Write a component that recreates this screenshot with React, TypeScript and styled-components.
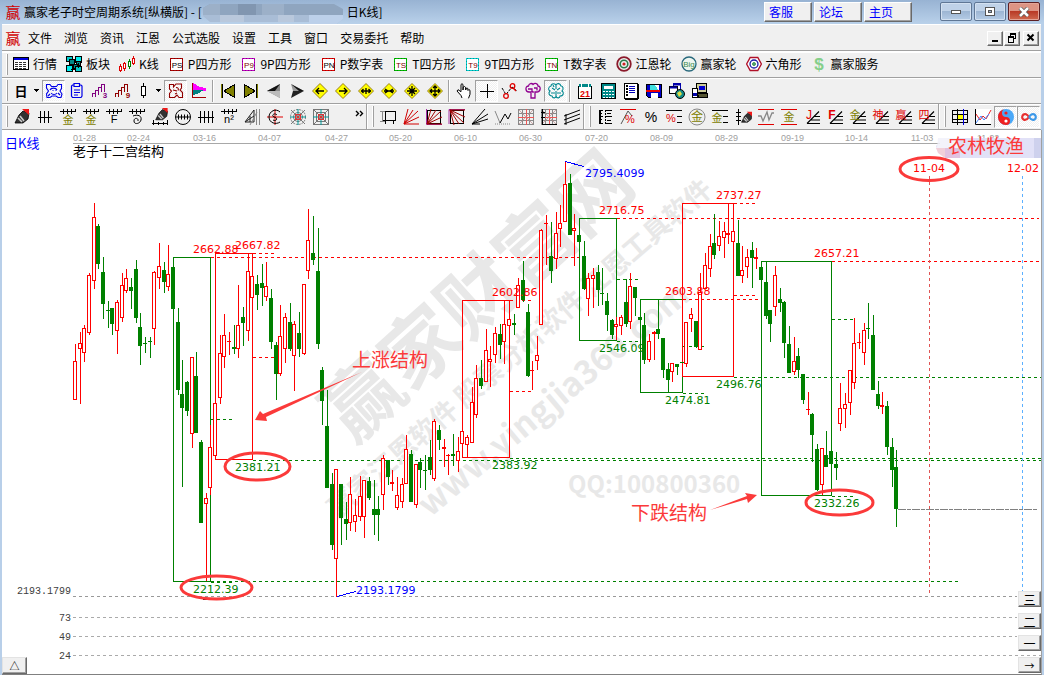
import React from 'react';
import styled, { createGlobalStyle, css } from 'styled-components';

const UI = `"Liberation Sans", "Noto Sans CJK SC", sans-serif`;
const CJK = `"Noto Sans CJK SC", sans-serif`;

const GlobalStyle = createGlobalStyle`
  * { box-sizing: border-box; }
  body { margin: 0; background: #fff; font-family: ${CJK}; font-size: 12px; color: #000; }
  button { font: inherit; color: inherit; margin: 0; padding: 0; border: 0; background: none; }
`;

/* ---------- window frame ---------- */

const Window = styled.div`
  display: flex;
  flex-direction: column;
  min-height: 100vh;
  background: #b8cfe9;
`;

const TitleBar = styled.header`
  display: flex;
  align-items: center;
  height: 24px;
  padding: 0 4px 0 5px;
  background: linear-gradient(#98b3d3, #b9d1ea);
`;

const TitleText = styled.h1`
  margin: 0 0 0 3px;
  font-size: 12px;
  font-weight: 400;
  line-height: 24px;
  white-space: pre;
`;

const Grow = styled.div`
  flex: 1;
`;

const LinkRow = styled.nav`
  display: flex;
  gap: 2px;
  margin-right: 28px;
`;

const TitleLink = styled.a`
  width: 48px;
  height: 20px;
  padding-left: 4px;
  line-height: 17px;
  color: #00f;
  text-decoration: none;
  background: #f0f0f0;
  border: 1px solid;
  border-color: #fff #696969 #696969 #fff;
  box-shadow: inset -1px -1px #a0a0a0;
`;

const CaptionRow = styled.div`
  display: flex;
  gap: 2px;
  height: 20px;
`;

const CaptionButton = styled.button<{ $close?: boolean }>`
  display: flex;
  align-items: center;
  justify-content: center;
  width: 32px;
  height: 19px;
  border: 1px solid ${p => (p.$close ? '#5c1f23' : '#5f7795')};
  border-radius: 2px;
  box-shadow: inset 0 0 0 1px ${p => (p.$close ? '#e3a598' : '#d3e1f1')};
  background: ${p => (p.$close
    ? 'linear-gradient(#dd9484 45%, #b93a26 50%, #cf6a50)'
    : 'linear-gradient(#bfd2e8 45%, #9db6d3 50%, #b5cce6)')};
`;

const Frame = styled.div`
  flex: 1;
  display: flex;
  flex-direction: column;
  margin: 0 3px 0 2px;
  background: #f0f0f0;
`;

const MenuBar = styled.nav`
  display: flex;
  align-items: center;
  height: 28px;
  padding: 0 2px 0 3px;
  border-top: 1px solid #fff;
  border-bottom: 1px solid #fff;
  box-shadow: inset 0 -1px #a0a0a0;
`;

const MenuItems = styled.div`
  display: flex;
  gap: 12px;
  margin-left: 7px;
`;

const MenuButton = styled.button`
  line-height: 24px;
`;

const MdiRow = styled.div`
  display: flex;
  gap: 1px;
`;

const MdiButton = styled.button<{ $apart?: boolean }>`
  width: 16px;
  height: 15px;
  margin-left: ${p => (p.$apart ? '2px' : '0')};
  display: flex;
  align-items: center;
  justify-content: center;
  border: 1px solid;
  border-color: #fff #696969 #696969 #fff;
  box-shadow: inset -1px -1px #a0a0a0;
`;

const ToolRow = styled.div`
  display: flex;
  height: 26px;
  border-bottom: 1px solid #a0a0a0;
  box-shadow: inset 0 1px #fff;
  overflow: hidden;
`;

const Group = styled.div<{ $divided?: boolean }>`
  display: flex;
  align-items: center;
  padding-left: 4px;
  flex: none;
  ${p => p.$divided && css`
    border-right: 1px solid #fff;
    box-shadow: inset -1px 0 #a0a0a0;
    padding-right: 1px;
  `}
`;

const Grip = styled.span`
  width: 2px;
  height: 21px;
  margin-right: 2px;
  background: #fff;
  border-right: 1px solid #a0a0a0;
`;

const Separator = styled.span`
  width: 6px;
  height: 22px;
  background: linear-gradient(90deg, transparent 2px, #a0a0a0 2px, #a0a0a0 3px, #fff 3px, #fff 4px, transparent 4px);
`;

const LabelTools = styled.div`
  display: flex;
  gap: 9px;
  padding: 0 0 2px 3px;
`;

const LabelTool = styled.button`
  display: flex;
  align-items: center;
  gap: 4px;
  height: 22px;
  white-space: nowrap;
`;

const ToolButton = styled.button<{ $on?: boolean; $size?: 'date' | 'candle' | 'arrow' | 'more' }>`
  display: flex;
  align-items: center;
  justify-content: ${p => (p.$size === 'more' ? 'flex-end' : 'center')};
  width: ${p => ({ date: 22, candle: 20, arrow: 10, more: 34, none: 23 })[p.$size ?? 'none']}px;
  height: 22px;
  ${p => p.$on && css`
    border: 1px solid;
    border-color: #a0a0a0 #fff #fff #a0a0a0;
    background: conic-gradient(#fff 25%, #f0f0f0 0 50%, #fff 0 75%, #f0f0f0 0) 0 0 / 2px 2px;
  `}
`;

const ChartArea = styled.main`
  position: relative;
  flex: 1;
  background: #fff;
  border-right: 1px solid #a0a0a0;
  border-bottom: 1px solid #808080;
  margin-right: -1px;
`;

const ChartSvg = styled.svg`
  display: block;
  width: 100%;
  height: auto;
`;

const SideButtons = styled.div`
  position: absolute;
  right: 0;
  bottom: 1px;
  display: flex;
  flex-direction: column;
  gap: 6px;
`;

const CornerButton = styled.div`
  position: absolute;
  left: 0;
  bottom: 0;
`;

const SmallButton = styled.button<{ $wide?: boolean; $fine?: boolean }>`
  display: block;
  width: ${p => (p.$wide ? 25 : 23)}px;
  height: ${p => (p.$wide ? 17 : 16)}px;
  font-size: ${p => (p.$fine ? 10 : 12)}px;
  line-height: 13px;
  overflow: hidden;
  background: #f0f0f0;
  border: 1px solid;
  border-color: #e3e3e3 #696969 #696969 #e3e3e3;
  box-shadow: inset -1px -1px #a0a0a0;
`;

/* ---------- icons ---------- */

type P = { children: React.ReactNode; w?: number; h?: number; smooth?: boolean };
const Svg = ({ children, w = 18, h = 18, smooth }: P) => (
  <svg width={w} height={h} viewBox={`0 0 ${w} ${h}`} fill="none" stroke="#000"
    shapeRendering={smooth ? 'auto' : 'crispEdges'} aria-hidden="true">{children}</svg>
);

const Glyph = ({ x = 9, y = 16, size = 11, color = '#000', bold, children }:
  { x?: number; y?: number; size?: number; color?: string; bold?: boolean; children: string }) => (
  <text x={x} y={y} fontSize={size} fill={color} stroke="none" textAnchor="middle"
    fontWeight={bold ? 700 : 400} fontFamily={UI}>{children}</text>
);

const Logo = () => <Svg w={16} h={20}><Glyph x={8} y={16} size={15} color="#d00000">赢</Glyph></Svg>;

const Tag = ({ text, edge, ink }: { text: string; edge: string; ink: string }) => (
  <Svg w={16} h={16}>
    <rect x="2.500" y="2.500" width="12" height="12" fill="#fff" stroke={edge} />
    <rect x="2.500" y="2.500" width="12" height="12" stroke="#000" strokeDasharray="1 2" opacity=".3" />
    <Glyph x={9} y={12} size={8} color={ink}>{text}</Glyph>
  </Svg>
);

const QuoteIcon = () => (
  <Svg w={16} h={16}>
    <rect x=".5" y="1.500" width="15" height="12" fill="#fff" />
    <rect x="1" y="2" width="14" height="2" fill="#0000e0" stroke="none" />
    <path d="M2 6.500h12M2 8.500h12M2 10.500h12M2 12.500h12" strokeDasharray="3 1" stroke="#333" />
  </Svg>
);
const BlockIcon = () => (
  <Svg w={16} h={16}>
    <rect x=".5" y=".5" width="6" height="5" fill="#0cc" /><rect x="9.500" y=".5" width="6" height="6" fill="#0ee" />
    <rect x="3.500" y="3.500" width="5" height="5" fill="#088" /><rect x="10.500" y="5.500" width="4" height="4" fill="#088" />
    <rect x=".5" y="9.500" width="6" height="6" fill="#0ee" /><rect x="7.500" y="8.500" width="4" height="4" fill="#088" />
    <rect x="9.500" y="10.500" width="6" height="5" fill="#0cc" /><path d="M5 13.500h5M12.500 7v5" />
  </Svg>
);
const KIcon = () => (
  <Svg w={16} h={18}>
    <g stroke="#e00000"><path d="M1.500 9v8M5.500 7v9M14.500 1v9" /><rect x=".5" y="11.500" width="2" height="4" fill="#fff" />
      <rect x="4.500" y="8.500" width="2" height="5" fill="#fff" /><rect x="13.500" y="3.500" width="2" height="5" fill="#fff" /></g>
    <g stroke="#008000"><path d="M10.500 4v10" /><rect x="9.500" y="6.500" width="2" height="5" fill="#fff" /></g>
  </Svg>
);
const GannIcon = () => (
  <Svg w={16} h={16} smooth><circle cx="8" cy="8" r="6.800" stroke="#8b1a2b" strokeWidth="1.800" /><circle cx="8" cy="8" r="3.800" stroke="#2c7a4b" strokeWidth="1.600" />
    <circle cx="8" cy="8" r="1.600" fill="#c22" stroke="none" /></Svg>
);
const BigIcon = () => (
  <Svg w={16} h={16} smooth><circle cx="8" cy="8" r="7" fill="#eef6f0" stroke="#28687c" strokeWidth="1.300" /><Glyph x={8} y={11} size={8} color="#3d8b50">Big</Glyph></Svg>
);
const HexIcon = () => (
  <Svg w={16} h={16} smooth><path d="M4.200 1.500h7.600L15.400 8l-3.600 6.500H4.200L.6 8z" fill="#fff" stroke="#b01028" strokeWidth="1.400" /><circle cx="8" cy="8" r="4" stroke="#1c1ca8" strokeWidth="1.300" />
    <circle cx="8" cy="8" r="1.500" fill="#58b070" stroke="#268040" strokeWidth=".8" /></Svg>
);
const DollarIcon = () => <Svg w={16} h={18} smooth><Glyph x={8} y={15} size={17} color="#85cf8a" bold>$</Glyph></Svg>;

const Down = () => <Svg w={6} h={4}><path d="M0 0h5L2.500 3z" fill="#000" stroke="none" /></Svg>;
const PeriodIcon = () => <Svg><Glyph y={14} size={13} bold>日</Glyph></Svg>;
const KiteIcon = () => (
  <Svg smooth><g stroke="#0000e8" strokeWidth="1.100"><path d="M1.500 2.500h3.500l1.500 2h5l1.500-2h3.500v4l-1.500 2.500 2 3-1 3.500h-3l-2-1.500H7l-2 1.500H2l-.5-3.500 2-3L1.500 6z" />
    <path d="M5 8c1-2.500 6-2.500 7 0M6 11c1.500 2 4.500 2 6 0M7.500 8.500h1M10.500 8.500h1M13 11l2 2M5 12l-2 2" /></g></Svg>
);
const ClipIcon = () => (
  <Svg smooth><g stroke="#0000e8" strokeWidth="1.200"><path d="M6 3H4.500L3.500 4v10l1 1.500h8.500l1-1.500V4l-1-1h-1.500M6 1.500h5.500v3H6zM6 8h6M6 10.500h6M6 13h4" /></g></Svg>
);
const WaveNum = ({ n, c }: { n: string; c: string }) => (
  <Svg><path d="M1.500 15v-4h3v4M4.500 11V8h3v5M7.500 9V5h3v5M10.500 6V2h3v8" stroke={c} /><Glyph x={14} y={16} size={8} color={c} bold>{n}</Glyph></Svg>
);
const CandleIcon = () => <Svg><path d="M8.500 1v15" /><rect x="6.500" y="4.500" width="4" height="9" fill="#fff" /></Svg>;
const GearIcon = () => (
  <Svg smooth><path d="M2.500 2.500h4v2.500l2.500-3h5.500v4l-1.500 2 2.500 2.500v5h-3.500l-2-2.500-2.500 2.500H2.500v-4l2-2.500-2-2zM6 8l4 1M9 5.500c2 0 3 1 2 3M8 12l2-1" stroke="#900000" strokeWidth="1.100" /></Svg>
);
const FlagIcon = () => (
  <Svg><path d="M3 1l7 4 6 1v3H3z" fill="#f0f" stroke="none" /><path d="M3 8h11l-5 3-6 2z" fill="#008080" stroke="none" /><path d="M2.500 1v15M2 15.500h14" stroke="#a00000" /></Svg>
);
const FirstIcon = ({ flip }: { flip?: boolean }) => (
  <Svg><g transform={flip ? 'matrix(-1 0 0 1 18 0)' : undefined}><path d="M15.500 2.500v13L5 9z" fill="#808000" /><path d="M2.500 2v14" stroke="#808000" /><path d="M3.500 2v14" /></g></Svg>
);
const StepIcon = ({ flip }: { flip?: boolean }) => (
  <Svg smooth>{flip
    ? <g stroke="none"><path d="M3 2l13 7H5z" fill="#999" /><path d="M3 2l13 7H11z" fill="#111" /><path d="M3 16l13-7H5z" fill="#222" /></g>
    : <g stroke="none"><path d="M2 9l13-7v14z" fill="#888" /><path d="M2 9l13 7V9z" fill="#bbb" /><path d="M2 9l13-7-5 7z" fill="#111" /></g>}</Svg>
);
const Diamond = ({ d }: { d: string }) => (
  <Svg smooth><path d="M9 1.500L16.500 9 9 16.500 1.500 9z" fill="#ff0" stroke="#806000" strokeWidth=".8" /><path d={d} strokeWidth="1.300" /></Svg>
);
const HandIcon = () => (
  <Svg smooth><path d="M7 16l-1-2.500-4-4.500 1-1.300 3 2V2.500l1-.8 1 .8V8l.3-3 1.200-.5 1 .8.200 2.700.800-2 1.200.3.300 2.200.8-1 1.200.8v4l-1.500 4" fill="#fff" /></Svg>
);
const CrossIcon = () => <Svg><path d="M9.500 2v14M2 9.500h14" /></Svg>;
const PeakIcon = () => (
  <Svg smooth><path d="M1 6l4 6.500L11 5l5 4" strokeDasharray="3 1" /><g stroke="#e00000" strokeWidth="1.300"><circle cx="11.500" cy="4" r="2.300" /><circle cx="5" cy="14" r="2.300" /><path d="M12 6l3 3" /></g></Svg>
);
const CloudIcon = () => (
  <Svg smooth><path d="M5 10c-4 0-4-6-.5-6C5 1 8 1 9 2.500c2-2 5-1 5 1.500 3 0 3 5-.5 6H11v6H7v-6zM4 7h4v3M10 6h3v2.500M9 9v2" stroke="#900090" strokeWidth="1.300" /></Svg>
);
const BrainIcon = () => (
  <Svg smooth><path d="M9 3C6 0 4 3 4 4 1 5 1 8 3 9c-2 2-1 5 2 5 1 3 4 2 4 0 1 3 4 2 4 0 4 0 4-4 2-5 2-2 1-5-1-5-1-3-4-3-5-1M9 3v4M9 9v5M5 6l3 2M4 11h4M13 6l-3 2M14 11h-4M6 3l1 2" stroke="#008890" strokeWidth="1.100" /></Svg>
);
const CalIcon = () => <Svg><rect x="2.500" y="4.500" width="13" height="12" fill="#fff" /><path d="M3 3.500h12" stroke="#088" strokeWidth="3" /><path d="M5.500 1v4M12.500 1v4" stroke="#fff" /><Glyph y={15} size={9} color="#e00000" bold>21</Glyph></Svg>;
const CalcIcon = () => <Svg><rect x="2.500" y="1.500" width="14" height="15" fill="#088" /><rect x="5" y="4" width="9" height="3" fill="#fff" stroke="none" /><path d="M4 9.500h11M4 12.500h11M4 15h11" stroke="#fff" strokeDasharray="2 1" /></Svg>;
const NoteIcon = () => <Svg><rect x="2.500" y="1.500" width="13" height="15" fill="#fff" /><path d="M15.500 2v15M3 16.500h13" strokeWidth="2" /><path d="M7 4.500h6M7 6.500h6M7 8.500h6M7 10.500h6" stroke="#00b" /><path d="M4.500 3v12" strokeDasharray="2 1" strokeWidth="2" /></Svg>;
const DiskIcon = () => <Svg><path d="M1.500 2.500h15v13h-13l-2-2z" fill="#0000c8" /><rect x="5" y="3" width="9" height="6" fill="#40e0e0" stroke="none" /><path d="M10 3h4v6z" fill="#fff" stroke="none" /><rect x="1" y="8" width="14" height="2" fill="#e00" stroke="none" /><rect x="6" y="11" width="7" height="5" fill="#fff" stroke="none" /></Svg>;
const GlobeIcon = () => <Svg smooth><rect x="5.500" y="1.500" width="7" height="7" fill="#fff" stroke="#00a" /><rect x="1.500" y="4.500" width="8" height="7" fill="#fff" /><path d="M2 5.500h7M6 2.500h6" stroke="#00a" strokeWidth="2" /><circle cx="12" cy="12" r="4.500" fill="#188" /><path d="M9 11l3-2 2 3-3 3z" fill="#dd4" stroke="none" /></Svg>;
const PcIcon = () => <Svg><rect x="5.500" y="1.500" width="10" height="9" fill="#cc9" /><rect x="8" y="4" width="6" height="4" fill="#0000d0" stroke="none" /><path d="M6 11.500h10v4H8z" fill="#553" /><rect x="1.500" y="6.500" width="5" height="9" rx="1" fill="#fff" /><path d="M2 12h4" stroke="#00a" strokeWidth="3" /></Svg>;

const PenIcon = ({ ruler, small }: { ruler?: boolean; small?: boolean }) => (
  <Svg smooth>
    <g transform={small ? 'translate(6 3) scale(.75)' : ruler ? 'translate(3 -1) scale(.85)' : undefined}>
      <path d="M2 15l4-8 4-4 6 2-1 6-5 4z" fill="#333" strokeWidth=".8" /><path d="M7 8l4 5M5 10l4 4" stroke="#ccc" strokeWidth="1.600" />
      <path d="M9 1l7 0v6z" fill="#f01818" stroke="none" />
    </g>
    {ruler && <path d="M1 15.500h16M2.500 12v5M7.500 14v3M12.500 14v3M16.500 12v5" />}
    {small && <path d="M4.500 1v16M2 4.500h5M2 8.500h5M2 12.500h5" />}
  </Svg>
);
const Ticks = ({ n, children }: { n?: number; children?: React.ReactNode }) => (
  <Svg>{children
    ? <><path d="M1 3.500h16M4.500 1v5M8.500 1v5M12.500 1v5M16.500 1v3" />{children}</>
    : <path d={n === 4 ? 'M1 9.500h16M3.500 3v12M7.500 3v12M11.500 3v12M15.500 3v12' : 'M2 9.500h14M4.500 3v12M8.500 3v12M12.500 3v12'} />}</Svg>
);
const Spiral = () => <path d="M5 8c5-2 9 0 8 4s-7 5-7 1 5-3 4 0" shapeRendering="auto" />;
const DialIcon = () => <Svg smooth><circle cx="9" cy="9" r="7.500" /><path d="M2 9h14M4.500 6.500v5M7.500 6.500v5M10.500 6.500v5M13.500 6.500v5" /></Svg>;
const PrismIcon = () => <Svg smooth><path d="M2 14L11 2v12zM2 14l9-6M7 8v6" stroke="#222" /><path d="M13.500 1v16M16.500 1v16M7 17l7-13" stroke="#888" /></Svg>;
const SpiralCross = () => <Svg smooth><path d="M9 1v16M1 9h16" stroke="#e00000" /><path d="M11 7c-3-3-6 1-3 2 5 1 2 5-1 3M14 4c-4-4-11-1-11 5s7 8 11 5" /></Svg>;
const WebIcon = ({ square }: { square?: boolean }) => (
  <Svg smooth><g stroke="#777">{square ? <><rect x="1.500" y="1.500" width="15" height="15" /><rect x="4.500" y="4.500" width="9" height="9" /></> : <><circle cx="9" cy="9" r="7.500" strokeDasharray="2 1" /><circle cx="9" cy="9" r="4.500" /></>}<path d="M2 2l14 14M16 2L2 16" /></g>
    <path d="M9 1v16M1 9h16" stroke="#099" /><rect x="6.500" y="6.500" width="5" height="5" stroke="#d33" /><circle cx="9" cy="9" r="1.500" fill="#d33" stroke="none" /></Svg>
);
const FrameIcon = () => <Svg><path d="M1 3.500h5M1 13.500h5M3.500 3v11" stroke="#888" /><rect x="6.500" y="3.500" width="10" height="9" /><path d="M6.500 12v4M4 12.500h3M14.500 12v4" /></Svg>;
const Fan = ({ c = '#000', box, top }: { c?: string; box?: boolean; top?: boolean }) => (
  <Svg smooth>{box && <><rect x="2.500" y="2.500" width="13" height="13" /><path d={top ? 'M1 16V1.500h16' : 'M1.500 1v15.500H17'} stroke="#900090" strokeWidth=".8" /></>}
    <g transform={top ? 'matrix(1 0 0 -1 0 18)' : undefined}><path d={box || c !== '#000' ? 'M2 16L6 1M2 16L11 2M2 16L16 3M2 16L17 9M2 16h15' : 'M1 16L14 1M1 16L17 6M1 16L17 11M1 16h8'} stroke={c} /></g></Svg>
);
const ZigIcon = () => <Svg smooth><path d="M1 3l5 12" stroke="#888" /><path d="M6 15l5-9 3 5 3-6" /><path d="M1 16h16" stroke="#888" strokeDasharray="1 1" /></Svg>;
const GridIcon = ({ axes }: { axes?: boolean }) => (
  <Svg><path d="M1.500 1.500h15v15h-15zM1 5.500h16M1 12.500h16M5.500 1v16M12.500 1v16" stroke="#888" /><path d="M9.500 1v16M1 9.500h16" stroke="#e55" />
    <path d="M2 2l14 14M16 2L2 16" stroke="#b88" strokeWidth=".7" />{axes && <path d="M2.500 1v15.500H17M1 4.500h4M1 9.500h4" />}</Svg>
);
const ParallelIcon = () => <Svg smooth><path d="M1 8l16-6M1 12l16-6M1 16l16-6M3 6v11" /></Svg>;
const LadderIcon = () => <Svg><path d="M3.500 2v14" strokeWidth="2" /><path d="M3 2.500h4M3 5.500h3M3 8.500h4M3 11.500h3M3 15.500h4M9 2.500h7M9 8.500h7M9 15.500h7M11 5.500h4M11 12.500h4" /><path d="M9.500 2v14" strokeDasharray="2 1" /></Svg>;
const Percent = ({ kind }: { kind: 'angle' | 'plain' | 'lines' }) => (
  <Svg smooth>{kind === 'angle' && <><path d="M1 1.500h16" stroke="#e00000" shapeRendering="crispEdges" /><path d="M2 16L9 3l4 5" stroke="#555" /><Glyph x={11} y={15} size={11} color="#e00000">%</Glyph></>}
    {kind === 'plain' && <Glyph y={14} size={14}>%</Glyph>}
    {kind === 'lines' && <><path d="M1 2.500h16M12 8.500h5M12 14.500h5" /><Glyph x={6} y={14} size={11} color="#e00000">%</Glyph></>}</Svg>
);
const GoldCircle = () => <Svg smooth><circle cx="9" cy="9" r="8" stroke="#888" /><Glyph y={13} size={12} color="#808000">金</Glyph></Svg>;
const GoldLines = () => <Svg><path d="M1 2.500h16M12 8.500h5M12 14.500h5" /><Glyph x={6} y={14} size={11} color="#808000">金</Glyph></Svg>;
const Between = ({ gold }: { gold?: boolean }) => (
  <Svg smooth><path d="M1 1.500h16M1 16.500h16" stroke="#e00000" shapeRendering="crispEdges" />{gold ? <Glyph y={13} size={11} color="#808000">金</Glyph> : <path d="M1 8h3l2 5 4-9 2 8 3-7h2" stroke="#888" strokeWidth="1.300" />}</Svg>
);
const Mark = ({ t, c = '#e00000' }: { t: string; c?: string }) => (
  <Svg smooth><path d="M4 15.500L16 3.500M4 15.500h13M8 12h9M11 8.500h6" strokeWidth="1.100" /><Glyph x={6} y={11} size={t.charCodeAt(0) > 255 ? 11 : 12} color={c} bold={t === 'F'}>{t}</Glyph></Svg>
);
const CellsIcon = () => <Svg><rect x="7" y="6" width="5" height="5" fill="#ff0" stroke="none" /><path d="M1.500 2.500h15v12h-15zM1 6.500h16M1 11.500h16M6.500 1v16" /><path d="M12.500 1v16" stroke="#00d" /></Svg>;
const TrendIcon = () => <Svg smooth><rect x="1" y="1" width="16" height="16" fill="#fff" stroke="none" /><path d="M1.500 1v15.500H17" /><path d="M2 6l4 6 3-4 3 3 5-9" stroke="#e22" /><path d="M2 15l5-7 3 4 5-6" stroke="#48f" /></Svg>;
const YinIcon = () => <Svg smooth><g stroke="none"><circle cx="9" cy="9" r="8" fill="#4aa8f8" /><path d="M9 1a8 8 0 0 0 0 16a4 4 0 0 0 0-8a4 4 0 0 1 0-8z" fill="#f02020" /><circle cx="9" cy="5" r="1.600" fill="#f02020" /><circle cx="9" cy="13" r="1.600" fill="#fff" /></g></Svg>;
const InfIcon = () => <Svg smooth><path d="M9 9C7 6 5 5.500 3.500 6.500s-2 4 0 5S7 12 9 9" stroke="#e83030" strokeWidth="2.200" /><path d="M9 9c2-3 4-3.500 5.500-2.500s2 4 0 5S11 12 9 9" stroke="#3c98e8" strokeWidth="2.200" /></Svg>;

/* ---------- toolbar contents ---------- */

const menus = ['文件', '浏览', '资讯', '江恩', '公式选股', '设置', '工具', '窗口', '交易委托', '帮助'];

const views: [string, React.ReactNode][] = [
  ['行情', <QuoteIcon />], ['板块', <BlockIcon />], ['K线', <KIcon />],
  ['P四方形', <Tag text="PS" edge="#b00000" ink="#000" />], ['9P四方形', <Tag text="P9" edge="#c000c0" ink="#800000" />],
  ['P数字表', <Tag text="PN" edge="#e00000" ink="#000" />], ['T四方形', <Tag text="TS" edge="#00c000" ink="#800000" />],
  ['9T四方形', <Tag text="T9" edge="#00d0d0" ink="#800000" />], ['T数字表', <Tag text="TN" edge="#00c000" ink="#800000" />],
  ['江恩轮', <GannIcon />], ['赢家轮', <BigIcon />], ['六角形', <HexIcon />], ['赢家服务', <DollarIcon />],
];

const arrows = [
  'M13 9H5M8 6L5 9l3 3', 'M5 9h8M10 6l3 3-3 3', 'M4 9h10M6.500 7l-2 2 2 2M11.500 7l2 2-2 2M9 6v6',
  'M4 9h10M5 7l3 2-3 2M13 7l-3 2 3 2', 'M4 9h10M9 4v10M6 6l6 6M12 6l-6 6', 'M4 9h10M9 4v10M7 6l2-2 2 2M7 12l2 2 2-2M6 7L4 9l2 2M12 7l2 2-2 2',
];

const lineTools = [
  <PenIcon />, <Ticks />, <Ticks><Glyph color="#808000">金</Glyph></Ticks>, <Ticks><Glyph color="#808000">金</Glyph></Ticks>,
  <Ticks><Glyph y={15}>F</Glyph></Ticks>, <Ticks><Spiral /></Ticks>, <PenIcon ruler />, <DialIcon />, <Ticks n={4} />,
  <Ticks><Glyph y={15}>n²</Glyph></Ticks>, <PrismIcon />, <SpiralCross />, <WebIcon />, <WebIcon square />,
];
const fanTools = [
  <FrameIcon />, <Fan c="#d00000" />, <Fan c="#a00000" box />, <Fan c="#a00000" box top />, <Fan />, <ZigIcon />, <GridIcon />, <GridIcon axes />, <ParallelIcon />,
];
const levelTools = [
  <LadderIcon />, <Percent kind="angle" />, <Percent kind="plain" />, <Percent kind="lines" />, <GoldCircle />, <GoldLines />, <PenIcon small />,
  <Between />, <Between gold />, <Mark t="J" />, <Mark t="F" />, <Mark t="金" c="#808000" />, <Mark t="神" />, <Mark t="赢" />, <Mark t="四" />,
];

const Tools = ({ items }: { items: React.ReactNode[] }) => <>{items.map((it, i) => <ToolButton key={i}>{it}</ToolButton>)}</>;

/* ---------- chart ---------- */

const RED = '#ff0000';
const GREEN = '#008000';
const INK = '#fb3a3a';

// x, high, body top, body bottom, low, rising (1) or falling (0)
type Candle = [number, number, number, number, number, 0 | 1];
const candles: Candle[] = [
  [75, 344, 361, 400, 400, 1], [80, 332, 343, 349, 404, 1], [84, 325, 328, 353, 362, 1], [89, 273, 275, 333, 335, 1], [94, 203, 217, 281, 289, 1],
  [98, 224, 226, 264, 269, 0], [103, 257, 272, 304, 319, 0], [108, 301, 310, 311, 328, 0], [112, 308, 308, 324, 335, 0], [117, 300, 302, 331, 354, 1],
  [122, 273, 285, 318, 322, 1], [126, 269, 278, 291, 293, 1], [131, 278, 287, 291, 309, 0], [136, 260, 269, 318, 323, 0], [140, 313, 327, 346, 365, 0],
  [145, 337, 343, 344, 353, 0], [150, 337, 341, 342, 358, 0], [154, 271, 272, 329, 345, 1], [159, 243, 266, 278, 289, 1], [164, 262, 270, 282, 293, 0],
  [168, 245, 274, 287, 291, 1], [173, 267, 267, 309, 309, 0], [178, 308, 322, 390, 395, 0], [182, 360, 394, 408, 487, 0], [187, 381, 382, 411, 416, 0],
  [192, 357, 357, 434, 448, 1], [196, 352, 376, 433, 433, 0], [201, 440, 442, 523, 523, 0], [206, 493, 498, 504, 581, 1], [210, 425, 447, 488, 495, 1],
  [215, 403, 403, 456, 456, 1], [220, 335, 353, 398, 404, 1], [224, 314, 335, 357, 368, 1], [229, 332, 341, 342, 355, 1], [234, 325, 347, 349, 354, 0],
  [238, 285, 325, 349, 358, 1], [243, 307, 317, 323, 346, 0], [248, 253, 271, 331, 341, 1], [252, 253, 276, 298, 298, 1], [257, 275, 284, 295, 310, 0],
  [262, 264, 283, 288, 306, 0], [266, 262, 286, 297, 301, 1], [271, 289, 298, 342, 349, 0], [276, 342, 345, 374, 400, 0], [280, 305, 336, 374, 376, 1],
  [285, 313, 317, 349, 363, 1], [290, 303, 322, 349, 351, 0], [294, 321, 324, 356, 391, 1], [299, 312, 333, 349, 357, 0], [304, 284, 284, 354, 355, 1],
  [308, 209, 240, 271, 279, 1], [313, 216, 253, 260, 265, 0], [318, 228, 271, 344, 349, 0], [322, 367, 370, 401, 425, 0], [327, 390, 426, 488, 488, 0],
  [332, 473, 484, 545, 550, 0], [336, 469, 469, 559, 597, 1], [341, 484, 484, 518, 545, 0], [346, 502, 519, 524, 540, 0], [350, 477, 494, 523, 531, 1],
  [355, 499, 515, 522, 532, 1], [360, 476, 496, 517, 521, 1], [364, 480, 480, 517, 538, 1], [369, 477, 481, 498, 500, 0], [374, 480, 509, 515, 535, 0],
  [378, 496, 509, 515, 541, 0], [383, 455, 458, 495, 510, 1], [388, 460, 460, 477, 485, 0], [392, 470, 482, 484, 491, 1], [397, 477, 495, 508, 510, 1],
  [402, 478, 484, 502, 508, 1], [406, 435, 449, 484, 484, 1], [411, 450, 454, 502, 502, 0], [416, 464, 464, 505, 508, 1], [420, 458, 462, 470, 488, 0],
  [425, 455, 470, 471, 490, 0], [430, 440, 457, 470, 475, 0], [434, 419, 421, 479, 481, 1], [439, 425, 430, 440, 450, 0], [444, 439, 447, 449, 467, 1],
  [448, 454, 455, 456, 475, 1], [453, 434, 454, 456, 466, 0], [458, 437, 451, 461, 472, 1], [462, 431, 431, 444, 444, 1], [467, 435, 437, 445, 457, 1],
  [472, 387, 402, 443, 443, 1], [476, 365, 378, 415, 418, 1], [481, 360, 378, 386, 389, 0], [486, 329, 350, 382, 382, 1], [490, 346, 359, 362, 387, 1],
  [495, 327, 333, 355, 363, 1], [500, 324, 334, 345, 359, 0], [504, 300, 324, 342, 364, 1], [509, 300, 319, 326, 326, 1], [514, 314, 323, 325, 335, 0],
  [518, 278, 285, 308, 308, 1], [523, 261, 280, 300, 302, 0], [528, 304, 312, 376, 377, 0], [532, 361, 370, 371, 390, 1], [537, 336, 355, 361, 370, 1],
  [541, 229, 230, 325, 325, 1], [546, 215, 223, 224, 265, 1], [551, 222, 256, 271, 283, 0], [556, 212, 233, 259, 269, 1], [560, 205, 223, 229, 247, 1],
  [565, 161, 184, 222, 222, 1], [570, 174, 183, 235, 235, 0], [574, 214, 228, 231, 266, 1], [579, 235, 235, 242, 242, 0], [584, 241, 256, 289, 290, 0],
  [588, 273, 278, 299, 316, 1], [593, 268, 275, 279, 308, 1], [598, 265, 272, 290, 306, 0], [602, 268, 293, 294, 305, 0], [607, 293, 301, 315, 331, 0],
  [612, 319, 320, 335, 339, 0], [616, 317, 324, 327, 340, 1], [621, 315, 317, 326, 335, 1], [626, 279, 302, 324, 327, 0], [630, 273, 286, 322, 329, 1],
  [635, 287, 287, 298, 316, 0], [640, 317, 317, 320, 320, 0], [644, 313, 325, 360, 364, 0], [649, 334, 341, 360, 362, 1], [654, 331, 332, 334, 360, 1],
  [658, 300, 329, 334, 339, 0], [663, 338, 338, 370, 378, 0], [668, 363, 369, 380, 392, 0], [672, 363, 363, 372, 382, 1], [677, 364, 364, 367, 375, 0],
  [682, 362, 362, 363, 363, 0], [686, 322, 322, 364, 367, 1], [691, 308, 314, 319, 332, 1], [696, 321, 321, 347, 348, 0], [700, 273, 292, 350, 350, 1],
  [705, 253, 265, 289, 289, 1], [710, 234, 246, 269, 277, 1], [714, 214, 243, 255, 259, 0], [719, 221, 236, 246, 251, 1], [724, 222, 231, 238, 258, 1],
  [728, 204, 233, 235, 244, 1], [733, 231, 231, 242, 242, 1], [738, 220, 243, 276, 276, 0], [742, 246, 270, 276, 283, 1], [747, 249, 257, 267, 278, 1],
  [752, 242, 250, 258, 288, 0], [756, 248, 257, 259, 269, 1], [761, 267, 267, 280, 280, 0], [766, 262, 282, 316, 319, 0], [770, 310, 310, 324, 342, 0],
  [775, 266, 275, 307, 316, 1], [780, 288, 299, 303, 312, 0], [784, 301, 302, 343, 358, 0], [789, 326, 344, 373, 373, 0], [794, 337, 361, 372, 375, 1],
  [798, 348, 356, 370, 378, 0], [803, 374, 374, 400, 404, 0], [808, 392, 409, 410, 415, 1], [812, 413, 414, 435, 462, 0], [817, 444, 449, 490, 491, 0],
  [822, 448, 448, 485, 495, 1], [826, 431, 455, 467, 467, 0], [831, 451, 451, 464, 464, 0], [836, 452, 464, 468, 480, 0], [840, 383, 408, 424, 431, 1],
  [845, 393, 404, 409, 428, 1], [850, 370, 370, 403, 415, 1], [854, 318, 343, 383, 389, 1], [859, 333, 342, 343, 349, 1], [864, 323, 330, 353, 365, 1],
  [868, 303, 328, 329, 339, 0], [873, 315, 335, 390, 390, 0], [878, 381, 394, 406, 409, 0], [882, 392, 405, 407, 414, 1], [887, 401, 406, 447, 455, 0],
  [892, 438, 447, 470, 487, 0], [896, 450, 467, 509, 527, 0],
];

// left, top, right, bottom, colour
const boxes: [number, number, number, number, string][] = [
  [173, 257, 210, 581, GREEN], [215, 253, 252, 459, RED], [462, 300, 509, 457, RED], [579, 218, 616, 340, GREEN],
  [640, 299, 682, 392, GREEN], [682, 203, 733, 376, RED], [761, 261, 831, 495, GREEN],
];

// start, end, y, colour
const levels: [number, number, number, string][] = [
  [211, 579, 257, RED], [253, 275, 253, RED], [253, 275, 357, RED], [211, 233, 419, GREEN], [253, 1041, 460, GREEN], [510, 1041, 458, GREEN],
  [211, 960, 581, GREEN], [211, 233, 582, GREEN], [510, 532, 300, RED], [510, 532, 391, RED], [617, 1039, 218, RED], [617, 639, 279, GREEN],
  [617, 639, 341, GREEN], [683, 761, 299, RED], [683, 705, 346, GREEN], [683, 705, 393, GREEN], [734, 756, 203, RED], [734, 756, 295, RED],
  [734, 1041, 377, GREEN], [832, 854, 319, GREEN], [832, 1039, 261, RED], [832, 854, 496, GREEN],
  [73, 1017, 596, '#999'], [73, 1017, 617, '#aaa'], [73, 1017, 636, '#aaa'], [73, 1041, 655, '#aaa'],
];

const prices: [number, number, string, string][] = [
  [193, 253, '2662.88', RED], [235, 249, '2667.82', RED], [492, 296, '2602.86', RED], [599, 214, '2716.75', RED], [585, 177, '2795.4099', '#00f'],
  [599, 352, '2546.09', GREEN], [665, 295, '2603.88', RED], [665, 404, '2474.81', GREEN], [716, 199, '2737.27', RED], [814, 257, '2657.21', RED],
  [716, 388, '2496.76', GREEN], [814, 507, '2332.26', GREEN], [492, 469, '2383.92', GREEN], [235, 471, '2381.21', GREEN], [193, 593, '2212.39', GREEN],
  [356, 594, '2193.1799', '#00f'], [913, 172, '11-04', RED], [1007, 172, '12-02', RED],
];

const dates: [number, string][] = [
  [73, '01-28'], [127, '02-24'], [193, '03-16'], [258, '04-07'], [325, '04-27'], [389, '05-20'], [454, '06-10'], [519, '06-30'],
  [585, '07-20'], [650, '08-09'], [715, '08-29'], [781, '09-19'], [845, '10-14'], [911, '11-03'], [977, '11-22'],
];

const scale: [number, string][] = [[594, '2193.1799'], [621, '73'], [640, '49'], [659, '24']];

const Chart = () => (
  <ChartSvg viewBox="2 130 1039 544" role="img" aria-label="日K线" fill="none">
    <g fill="#e8e8e8" fontFamily={CJK} fontWeight="700">
      <text transform="translate(353 445) rotate(-42)" fontSize="77">赢家财富网</text>
      <text transform="translate(338 519) rotate(-41)" fontSize="27">赢家江恩软件 股票分析软件 江恩工具软件</text>
      <text transform="translate(430 518) rotate(-40)" fontSize="33">www.yingjia360.com</text>
      <text x="568" y="493" fontSize="24">QQ:100800360</text>
    </g>

    <g fontFamily={UI} fontSize="9" fill="#a0a0a0">
      {dates.map(([x, t]) => <text key={t} x={x} y={141}>{t}</text>)}
    </g>
    <path d="M73 143.500H940" stroke="#a8a8a8" shapeRendering="crispEdges" />
    <g fontFamily={CJK} fontSize="13">
      <text x="5" y="148" fill="#00f">日K线</text>
      <text x="73" y="156" fill="#000">老子十二宫结构</text>
    </g>
    <g fontFamily={`"Liberation Mono", monospace`} fontSize="10" fill="#404040" textAnchor="end">
      {scale.map(([y, t]) => <text key={t} x="71" y={y}>{t}</text>)}
    </g>

    <g shapeRendering="crispEdges">
      {levels.map(([a, b, y, c], i) => <path key={i} d={`M${a} ${y + 0.5}H${b}`} stroke={c} strokeDasharray="3 3" />)}
      <path d="M898 509.500H1038" stroke="#808080" strokeDasharray="8 1 4 1" />
      <path d="M929.500 176V594" stroke="#e05555" strokeDasharray="3 3" />
      <path d="M1022.500 176V592" stroke="#5cb0ff" strokeDasharray="3 3" />
      {boxes.map(([l, t, r, b, c], i) => <rect key={i} x={l + 0.5} y={t + 0.5} width={r - l} height={b - t} stroke={c} />)}
      {candles.map(([x, hi, top, bot, lo, up]) => {
        const c = up ? RED : GREEN;
        const hollow = up && bot - top > 2;
        return (
          <g key={x} fill={c}>
            {lo > hi && <rect x={x} y={hi} width="1" height={lo - hi} />}
            {hollow
              ? <rect x={x - 1.5} y={top + 0.5} width="3" height={bot - top - 1} fill="#fff" stroke={c} />
              : <rect x={x - 2} y={top} width="4" height={bot - top} />}
          </g>
        );
      })}
      <path d="M203 599h7" stroke="#000" strokeWidth="2" />
      <path d="M565 161.500l19 5M337 596.500l19-5" stroke="#00f" />
    </g>

    <g fontFamily={`"DejaVu Sans", sans-serif`} fontSize="11">
      {prices.map(([x, y, t, c]) => <text key={t + x} x={x} y={y} fill={c}>{t}</text>)}
    </g>

    <g stroke={INK} strokeWidth="3">
      <ellipse cx="257.500" cy="466.500" rx="32.500" ry="13.500" />
      <ellipse cx="216.500" cy="587.500" rx="35.500" ry="11.500" />
      <ellipse cx="929" cy="169" rx="29" ry="11.500" />
      <ellipse cx="839.500" cy="502.500" rx="33.500" ry="12.500" />
    </g>
    <g fill={INK}>
      <path d="M362 372L263 414l-3-3-5 9 12 1-1-4z" />
      <path d="M710 510l37-14-2-3 12 2-9 8-1-4z" />
    </g>
    <g opacity=".85">
      <path d="M944 138h97v20H948l-10-6-2-6z" fill="#dcdcf6" />
      <path d="M936 148h9v10l-7-5z" fill="#efc8d4" /><path d="M945 148h15v10h-15z" fill="#dcb8dc" />
      <path d="M938 138h20v10h-21z" fill="#f2f2fb" /><path d="M1034 138h7v20h-7z" fill="#c6c9ea" />
    </g>
    <g fill={INK} fontFamily={CJK} fontSize="19">
      <text x="352" y="367">上涨结构</text>
      <text x="631" y="520">下跌结构</text>
      <text x="948" y="153">农林牧渔</text>
    </g>
  </ChartSvg>
);

const TitleMosaic = () => (
  <svg width="142" height="24" viewBox="0 0 142 24" aria-hidden="true">
    <clipPath id="mosaic"><path d="M8 4h124l9 5v10l-6 5H107v-2H8l-7-6V8z" /></clipPath>
    <g clipPath="url(#mosaic)">
      <path d="M0 4h142v11H0z" fill="#8fa5bf" /><path d="M0 15h142v9H0z" fill="#a9bdd6" />
      <path d="M0 4h18v11H0zM60 4h22v11H60z" fill="#9cb0c8" /><path d="M36 4h18v11H36z" fill="#8196b0" />
      <path d="M18 15h24v9H18zM76 15h16v9H76z" fill="#b9c8dc" /><path d="M107 15h35v9h-35z" fill="#bcd0ea" />
    </g>
  </svg>
);

export default function App() {
  return (
    <Window>
      <GlobalStyle />
      <TitleBar>
        <Logo />
        <TitleText>赢家老子时空周期系统[纵横版] - [</TitleText>
        <TitleMosaic />
        <TitleText as="span">日K线]</TitleText>
        <Grow />
        <LinkRow>
          {['客服', '论坛', '主页'].map(t => <TitleLink key={t} href="#">{t}</TitleLink>)}
        </LinkRow>
        <CaptionRow>
          <CaptionButton aria-label="最小化"><Svg w={12} h={9}><rect x="1.500" y="3.500" width="9" height="3" fill="#fff" stroke="#555" /></Svg></CaptionButton>
          <CaptionButton aria-label="还原"><Svg w={12} h={9}><rect x="1.500" y=".5" width="9" height="8" fill="#fff" stroke="#555" /><rect x="4.500" y="3.500" width="3" height="2" fill="#9db6d3" stroke="#555" /></Svg></CaptionButton>
          <CaptionButton $close aria-label="关闭"><Svg w={12} h={10} smooth><path d="M2 1l8 8M10 1L2 9" stroke="#555" strokeWidth="4" /><path d="M2 1l8 8M10 1L2 9" stroke="#fff" strokeWidth="2.500" /></Svg></CaptionButton>
        </CaptionRow>
      </TitleBar>
      <Frame>
        <MenuBar>
          <Logo />
          <MenuItems>{menus.map(m => <MenuButton key={m}>{m}</MenuButton>)}</MenuItems>
          <Grow />
          <MdiRow>
            <MdiButton aria-label="最小化"><Svg w={10} h={10}><path d="M2 8h6" strokeWidth="2" /></Svg></MdiButton>
            <MdiButton aria-label="还原"><Svg w={10} h={10}><path d="M3 1h6M1 4h6" strokeWidth="2" /><path d="M3.500 1v3M8.500 1v5M7 5.500h2M1.500 4v5h5V4" /></Svg></MdiButton>
            <MdiButton $apart aria-label="关闭"><Svg w={10} h={10} smooth><path d="M1.500 1.500l6 6M7.500 1.500l-6 6" strokeWidth="2" /></Svg></MdiButton>
          </MdiRow>
        </MenuBar>

        <ToolRow>
          <Group>
            <Grip />
            <LabelTools>
              {views.map(([t, icon]) => <LabelTool key={t}>{icon}{t}</LabelTool>)}
            </LabelTools>
          </Group>
        </ToolRow>

        <ToolRow>
          <Group>
            <Grip />
            <ToolButton $size="date"><PeriodIcon /></ToolButton>
            <ToolButton $size="arrow"><Down /></ToolButton>
            <ToolButton $on><KiteIcon /></ToolButton>
            <Tools items={[<ClipIcon />, <WaveNum n="3" c="#800080" />, <WaveNum n="9" c="#900000" />]} />
            <ToolButton $size="candle"><CandleIcon /></ToolButton>
            <ToolButton $size="arrow"><Down /></ToolButton>
            <ToolButton $on><GearIcon /></ToolButton>
            <ToolButton><FlagIcon /></ToolButton>
            <Separator />
            <Tools items={[<FirstIcon />, <FirstIcon flip />, <StepIcon />, <StepIcon flip />, ...arrows.map(d => <Diamond d={d} />)]} />
            <Separator />
            <ToolButton><HandIcon /></ToolButton>
            <ToolButton $on><CrossIcon /></ToolButton>
            <Tools items={[<PeakIcon />, <CloudIcon />]} />
            <ToolButton $on><BrainIcon /></ToolButton>
            <Separator />
            <Tools items={[<CalIcon />, <CalcIcon />, <NoteIcon />, <DiskIcon />, <GlobeIcon />, <PcIcon />]} />
          </Group>
        </ToolRow>

        <ToolRow>
          <Group $divided>
            <Grip />
            <Tools items={lineTools} />
            <ToolButton $size="more" aria-label="更多">
              <Svg w={12} h={16} smooth><path d="M2 2l2.500 2.500L2 7M6 2l2.500 2.500L6 7" strokeWidth="1.400" /></Svg>
            </ToolButton>
          </Group>
          <Group $divided><Grip /><Tools items={fanTools} /></Group>
          <Group $divided><Grip /><Tools items={levelTools} /></Group>
          <Group>
            <Grip />
            <Tools items={[<CellsIcon />, <TrendIcon />]} />
            <ToolButton $on><YinIcon /></ToolButton>
            <ToolButton $on><InfIcon /></ToolButton>
          </Group>
        </ToolRow>

        <ChartArea>
          <Chart />
          <CornerButton><SmallButton $wide $fine>△</SmallButton></CornerButton>
          <SideButtons>
            {['三', '二', '一', '→'].map(t => <SmallButton key={t} $fine={t === '→'}>{t}</SmallButton>)}
          </SideButtons>
        </ChartArea>
      </Frame>
    </Window>
  );
}
